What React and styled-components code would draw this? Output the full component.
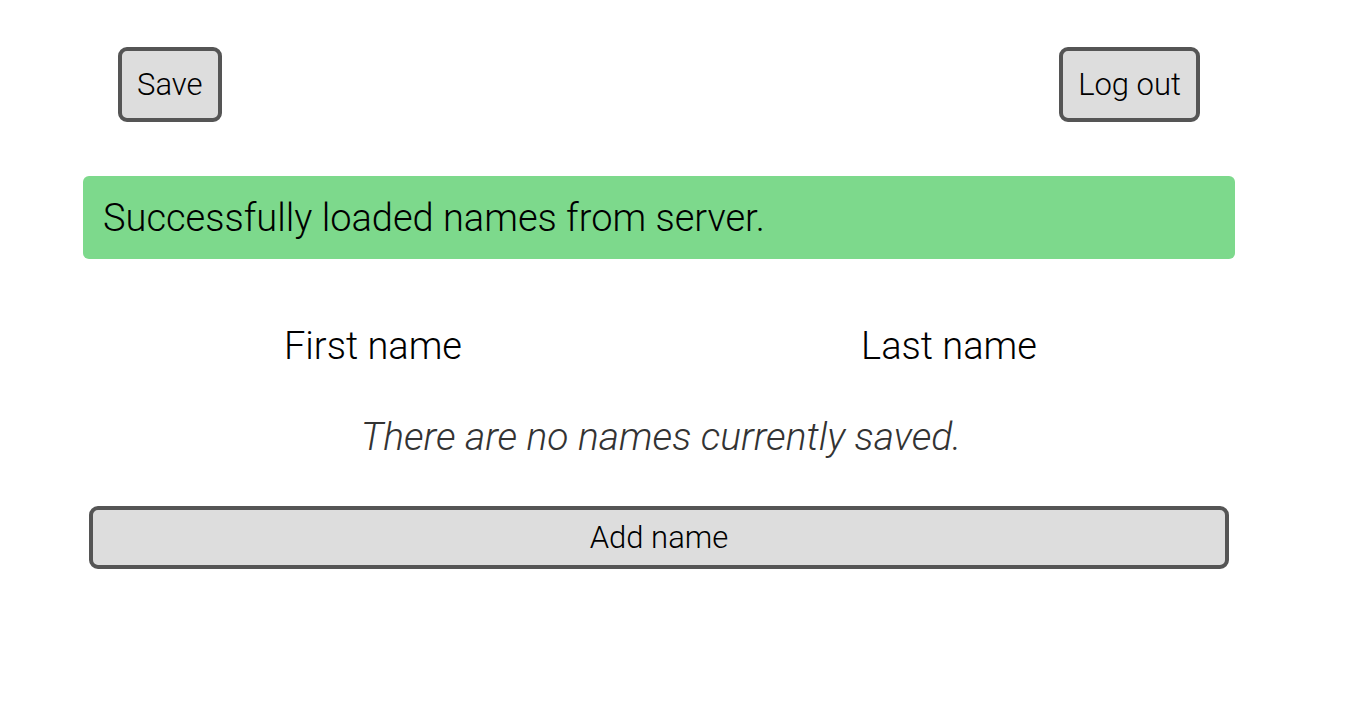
import React from "react";
import styled, { createGlobalStyle } from "styled-components";

const GlobalStyle = createGlobalStyle`
  * { box-sizing: border-box; }
  body {
    margin: 0;
    background: #fff;
    color: #000;
    font-family: Roboto, sans-serif;
    font-weight: 300;
    font-size: 38px;
    line-height: 48px;
  }
`;

const Page = styled.main`
  max-width: 1200px;
  margin: 0 auto;
  padding: 47px 39px 40px 9px;
`;

const Toolbar = styled.header`
  display: flex;
  justify-content: space-between;
  padding: 0 35px;
`;

const Button = styled.button`
  border: 4px solid #555;
  border-radius: 9px;
  background: #ddd;
  color: #000;
  font-family: inherit;
  font-weight: 300;
  font-size: 31px;
  line-height: 37px;
  padding: ${(p) => (p.$wide ? "9px 15px" : "15px")};
  width: ${(p) => (p.$wide ? "100%" : "auto")};
`;

const Notice = styled.p`
  margin: 54px 0 0;
  padding: 18px 20px 17px;
  border-radius: 6px;
  background: #7dd98c;
`;

const Names = styled.table`
  width: 100%;
  margin-top: 63px;
  border-collapse: collapse;
  table-layout: fixed;
`;

const Heading = styled.th`
  padding: 0 0 0 4px;
  font-weight: 300;
  text-align: center;
`;

const Empty = styled.td`
  padding: 43px 0 0 4px;
  color: #333;
  font-size: 39px;
  font-style: italic;
  text-align: center;
`;

const Footer = styled.footer`
  padding: 45px 6px 0;
`;

export default function App() {
  return (
    <>
      <GlobalStyle />
      <Page>
        <Toolbar>
          <Button type="button">Save</Button>
          <Button type="button">Log out</Button>
        </Toolbar>
        <Notice role="status">Successfully loaded names from server.</Notice>
        <Names>
          <thead>
            <tr>
              <Heading scope="col">First name</Heading>
              <Heading scope="col">Last name</Heading>
            </tr>
          </thead>
          <tbody>
            <tr>
              <Empty colSpan={2}>There are no names currently saved.</Empty>
            </tr>
          </tbody>
        </Names>
        <Footer>
          <Button type="button" $wide>Add name</Button>
        </Footer>
      </Page>
    </>
  );
}
